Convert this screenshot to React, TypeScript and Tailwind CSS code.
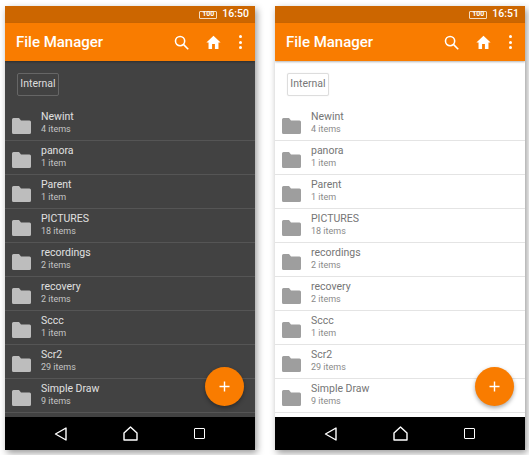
import React from 'react';

const rows = [
  { name: 'Newint', count: '4 items' },
  { name: 'panora', count: '1 item' },
  { name: 'Parent', count: '1 item' },
  { name: 'PICTURES', count: '18 items' },
  { name: 'recordings', count: '2 items' },
  { name: 'recovery', count: '2 items' },
  { name: 'Sccc', count: '1 item' },
  { name: 'Scr2', count: '29 items' },
  { name: 'Simple Draw', count: '9 items' },
];

function Folder({ className }: { className: string }) {
  return (
    <svg viewBox="0 0 19 16" className={`w-[19px] h-[16px] shrink-0 ${className}`} fill="currentColor">
      <path d="M1.5 0H7l2 2.5h8.5A1.5 1.5 0 0 1 19 4v10.5a1.5 1.5 0 0 1-1.5 1.5h-16A1.5 1.5 0 0 1 0 14.5v-13A1.5 1.5 0 0 1 1.5 0z" />
    </svg>
  );
}

function Phone({ dark, time }: { dark: boolean; time: string }) {
  return (
    <div className="relative w-[250px] h-[444px] flex flex-col overflow-hidden shadow-[2px_3px_7px_rgba(0,0,0,0.4)] font-['Roboto',sans-serif]">
      {/* status bar */}
      <div className="h-[17px] shrink-0 bg-[#cc6600] flex items-center justify-end pr-[6px] text-white">
        <div className="relative w-[18px] h-[8px] border border-[#f3dcc4] rounded-[1px] flex items-center justify-center text-[7px] font-bold leading-none mr-[5px]">
          100
        </div>
        <span className="text-[10.5px] font-medium leading-none">{time}</span>
      </div>

      {/* toolbar */}
      <div className="h-[38px] shrink-0 bg-[#f97c00] flex items-center pl-[11px] text-white relative z-10 shadow-[0_1px_2px_rgba(0,0,0,0.3)]">
        <span className="text-[15px] font-medium leading-none flex-1">File Manager</span>
        <svg viewBox="0 0 24 24" className="w-[17px] h-[17px] mr-[15px]" fill="none" stroke="currentColor" strokeWidth="2.2">
          <circle cx="10" cy="10" r="6.5" />
          <path d="M15 15l6.5 6.5" />
        </svg>
        <svg viewBox="0 0 24 24" className="w-[17px] h-[17px] mr-[17px]" fill="currentColor">
          <path d="M10 21v-7h4v7h5v-9h3L12 2.5 2 12h3v9z" />
        </svg>
        <div className="flex flex-col gap-[2.5px] mr-[13px]">
          <span className="w-[3px] h-[3px] rounded-full bg-white" />
          <span className="w-[3px] h-[3px] rounded-full bg-white" />
          <span className="w-[3px] h-[3px] rounded-full bg-white" />
        </div>
      </div>

      {/* content */}
      <div className={`flex-1 min-h-0 overflow-hidden ${dark ? 'bg-[#424242]' : 'bg-white'}`}>
        <div className="h-[46px] pt-[12px] pl-[12px]">
          <div className={`w-[42px] h-[23px] rounded-[2px] border flex items-center justify-center text-[10.5px] leading-none ${dark ? 'border-[#666666] text-[#dddddd]' : 'border-[#dddddd] text-[#777777] shadow-[0_0_1px_rgba(0,0,0,0.15)]'}`}>
            Internal
          </div>
        </div>
        {rows.map((row) => (
          <div key={row.name} className={`h-[34px] flex items-center pl-[7px] border-b ${dark ? 'border-[#555555]' : 'border-[#e4e4e4]'}`}>
            <Folder className={`mt-[4px] ${dark ? 'text-[#bdbdbd]' : 'text-[#9e9e9e]'}`} />
            <div className="ml-[10px] -mt-[2px]">
              <div className={`text-[10.5px] leading-[14px] ${dark ? 'text-[#e0e0e0]' : 'text-[#757575]'}`}>{row.name}</div>
              <div className={`text-[9px] leading-[11px] ${dark ? 'text-[#c4c4c4]' : 'text-[#8a8a8a]'}`}>{row.count}</div>
            </div>
          </div>
        ))}
      </div>

      {/* nav bar */}
      <div className="h-[33px] shrink-0 bg-black flex items-center text-white pl-[49px]">
        <svg viewBox="0 0 13 14" className="w-[13px] h-[14px]" fill="none" stroke="currentColor" strokeWidth="1.4">
          <path d="M12 1v12L1.5 7z" strokeLinejoin="round" />
        </svg>
        <svg viewBox="0 0 15 15" className="w-[15px] h-[15px] ml-[56px]" fill="none" stroke="currentColor" strokeWidth="1.4">
          <path d="M7.5 1L14 7v7H1V7z" strokeLinejoin="round" />
        </svg>
        <div className="w-[11px] h-[11px] ml-[56px] border-[1.5px] border-white rounded-[1px]" />
      </div>

      {/* fab */}
      <div className="absolute left-[200px] top-[361px] w-[39px] h-[39px] rounded-full bg-[#f97c00] shadow-[0_2px_4px_rgba(0,0,0,0.35)] flex items-center justify-center text-white">
        <svg viewBox="0 0 11 11" className="w-[11px] h-[11px]" stroke="currentColor" strokeWidth="1.4">
          <path d="M5.5 0.5v10M0.5 5.5h10" />
        </svg>
      </div>
    </div>
  );
}

export default function App() {
  return (
    <div className="w-[529px] h-[455px] bg-white flex gap-[20px] pl-[5px] pt-[6px] overflow-hidden">
      <Phone dark time="16:50" />
      <Phone dark={false} time="16:51" />
    </div>
  );
}
